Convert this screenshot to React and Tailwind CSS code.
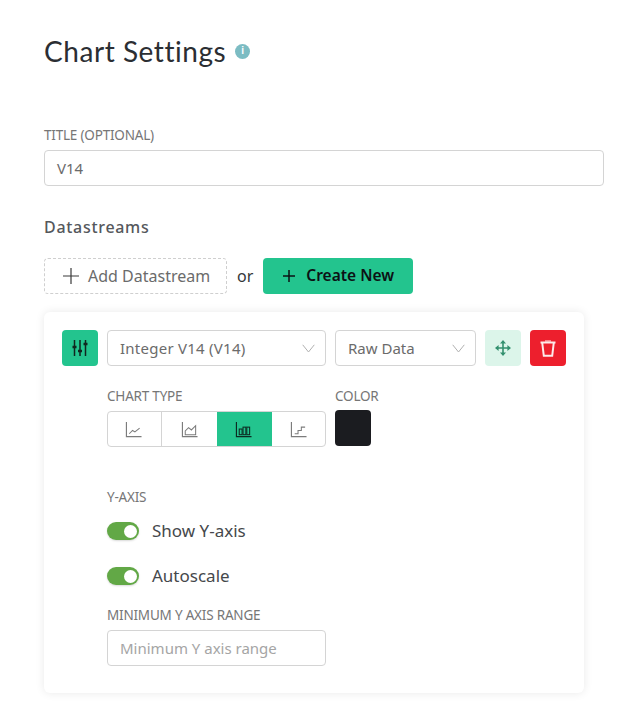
import React from "react";

const UI = "font-['Noto_Sans','Open_Sans',sans-serif]";

function LineIcon() {
  return <polyline points="4.5,13.5 8,10 10.5,11.5 15.5,7.5" fill="none" stroke="currentColor" strokeWidth="1.1" />;
}

function AreaIcon() {
  return <path d="M4.5 14.5 V10.5 L8 7 L11 9.5 L15.5 5 V14.5 Z" fill="none" stroke="currentColor" strokeWidth="1.1" />;
}

function BarIcon() {
  return (
    <g fill="none" stroke="currentColor" strokeWidth="1.1">
      <rect x="4.5" y="8.5" width="3" height="6" />
      <rect x="8.5" y="6.5" width="3" height="8" />
      <rect x="12.5" y="6.5" width="3" height="8" />
    </g>
  );
}

function StepIcon() {
  return <polyline points="5,13.5 8.5,13.5 8.5,10 12,10 12,6.5 16,6.5" fill="none" stroke="currentColor" strokeWidth="1.1" />;
}

function ChartIcon({ children }) {
  return (
    <svg width="17" height="17" viewBox="0 0 18 18" className="block">
      <path d="M1.5 1 V16.5 H17.5" fill="none" stroke="currentColor" strokeWidth="1.2" />
      {children}
    </svg>
  );
}

function PlusIcon({ size, width = 1.2 }) {
  const mid = size / 2;
  return (
    <svg width={size} height={size} viewBox={`0 0 ${size} ${size}`} stroke="currentColor" strokeWidth={width} className="block shrink-0">
      <path d={`M${mid} 0 V${size} M0 ${mid} H${size}`} />
    </svg>
  );
}

function Chevron() {
  return (
    <svg width="13" height="9" viewBox="0 0 13 9" fill="none" stroke="#b0b0b0" strokeWidth="1" className="block">
      <path d="M0.7 0.8 L6.5 8 L12.3 0.8" />
    </svg>
  );
}

function SlidersIcon() {
  return (
    <svg width="16" height="18" viewBox="0 0 16 18" fill="none" stroke="currentColor" strokeWidth="1.5" className="block">
      <path d="M2.5 1 V17 M8 1 V17 M13.5 1 V17" />
      <path d="M0.5 8 H4.5 M6 12 H10 M11.5 5 H15.5" strokeWidth="2.4" />
    </svg>
  );
}

function MoveIcon() {
  return (
    <svg width="16" height="16" viewBox="0 0 16 16" className="block" fill="currentColor">
      <path d="M8 2 V14 M2 8 H14" fill="none" stroke="currentColor" strokeWidth="1.6" />
      <path d="M8 0 L11 3.6 H5 Z M8 16 L11 12.4 H5 Z M0 8 L3.6 5 V11 Z M16 8 L12.4 5 V11 Z" />
    </svg>
  );
}

function TrashIcon() {
  return (
    <svg width="16" height="17" viewBox="0 0 16 17" fill="none" stroke="#fdeaea" strokeWidth="2" className="block">
      <path d="M0.5 2.5 H15.5" />
      <path d="M2.2 2.5 L3.8 15.8 H12.2 L13.8 2.5" />
      <path d="M5 1 H11" strokeWidth="1" />
    </svg>
  );
}

function FieldLabel({ children }) {
  return <div className="text-[13.5px] leading-[16px] tracking-[-0.2px] text-[#767676]">{children}</div>;
}

function Select({ label, width, spacing }) {
  return (
    <div className={`flex h-9 items-center justify-between rounded border border-[#d4d4d4] bg-white pl-3 pr-[10px] text-[15px] text-[#6b6b6b] ${width}`}>
      <span className={spacing}>{label}</span>
      <Chevron />
    </div>
  );
}

function Toggle({ label }) {
  return (
    <div className="flex h-[18px] items-center">
      <div className="flex h-[18px] w-8 items-center justify-end rounded-full bg-[#62a846] pr-[2px] shadow-[0_1px_2px_rgba(0,0,0,0.15)]">
        <div className="h-[13px] w-[13px] rounded-full bg-white" />
      </div>
      <span className="ml-[13px] text-[17px] text-[#45484b]">{label}</span>
    </div>
  );
}

export default function App() {
  return (
    <div className={`${UI} min-h-[707px] bg-white pl-11 pr-[31px] pt-[30px]`}>
      <div className="flex h-[42px] items-center">
        <h1 className="font-['Lato',sans-serif] text-[28px] font-normal tracking-[0.55px] text-[#2b2e33]">Chart Settings</h1>
        <div className="ml-[9px] flex h-[15px] w-[15px] items-center justify-center rounded-full bg-[#7cbcc3]">
          <span className="font-['Liberation_Sans',sans-serif] text-[10px] font-bold leading-none text-white">i</span>
        </div>
      </div>

      <div className="mt-[55px]">
        <FieldLabel>TITLE (OPTIONAL)</FieldLabel>
      </div>
      <div className="mt-[7px] flex h-9 items-center rounded border border-[#d4d4d4] pl-3 text-[15px] text-[#6b6b6b]">V14</div>

      <div className="mt-[31px] text-[16px] font-medium leading-[20px] tracking-[0.7px] text-[#55585c]">Datastreams</div>

      <div className="mt-[21px] flex items-center">
        <div className="flex h-9 w-[183px] items-center rounded border border-dashed border-[#cfcfcf] pl-[18px] text-[16px] text-[#6b6b6b]">
          <span className="text-[#3a3a3a]"><PlusIcon size={16} /></span>
          <span className="ml-[9px]">Add Datastream</span>
        </div>
        <span className="ml-[10px] text-[16px] text-[#333639]">or</span>
        <div className="ml-[10px] flex h-9 w-[150px] items-center rounded bg-[#23c48e] pl-[20px] text-[15.5px] font-semibold text-[#0c1114]">
          <PlusIcon size={12} width={1.5} />
          <span className="ml-[11px]">Create New</span>
        </div>
      </div>

      <div className="mt-[18px] h-[381px] w-[540px] rounded-md bg-white p-[18px] shadow-[0_0_10px_rgba(0,0,0,0.09)]">
        <div className="flex gap-[9px]">
          <div className="flex h-9 w-9 items-center justify-center rounded bg-[#23c48e] text-[#10261f]">
            <SlidersIcon />
          </div>
          <Select label="Integer V14 (V14)" width="w-[219px]" spacing="tracking-[0.25px]" />
          <Select label="Raw Data" width="w-[141px]" />
          <div className="flex h-9 w-9 items-center justify-center rounded bg-[#dcf5ea] text-[#32906e]">
            <MoveIcon />
          </div>
          <div className="flex h-9 w-9 items-center justify-center rounded bg-[#ed1f2d]">
            <TrashIcon />
          </div>
        </div>

        <div className="ml-[45px] mt-[22px] flex gap-[9px]">
          <div>
            <FieldLabel>CHART TYPE</FieldLabel>
            <div className="mt-[7px] flex h-9 w-[219px] overflow-hidden rounded border border-[#d4d4d4] text-[#7c7c7c]">
              <div className="flex w-[54px] items-center justify-center border-r border-[#d4d4d4] pr-[2px]">
                <ChartIcon><LineIcon /></ChartIcon>
              </div>
              <div className="flex w-[55px] items-center justify-center">
                <ChartIcon><AreaIcon /></ChartIcon>
              </div>
              <div className="flex w-[55px] items-center justify-center bg-[#23c48e] pr-[3px] text-[#0c2b22]">
                <ChartIcon><BarIcon /></ChartIcon>
              </div>
              <div className="flex flex-1 items-center justify-center">
                <ChartIcon><StepIcon /></ChartIcon>
              </div>
            </div>
          </div>
          <div>
            <FieldLabel>COLOR</FieldLabel>
            <div className="mt-[6px] h-9 w-9 rounded bg-[#1b1c20]" />
          </div>
        </div>

        <div className="ml-[45px] mt-[42px]">
          <FieldLabel>Y-AXIS</FieldLabel>
          <div className="mt-[17px]">
            <Toggle label="Show Y-axis" />
          </div>
          <div className="mt-[27px]">
            <Toggle label="Autoscale" />
          </div>
          <div className="mt-[22px]">
            <FieldLabel>MINIMUM Y AXIS RANGE</FieldLabel>
          </div>
          <div className="mt-[7px] flex h-9 w-[219px] items-center rounded border border-[#d4d4d4] pl-3 text-[15px] text-[#a5a5a5]">
            Minimum Y axis range
          </div>
        </div>
      </div>
    </div>
  );
}
